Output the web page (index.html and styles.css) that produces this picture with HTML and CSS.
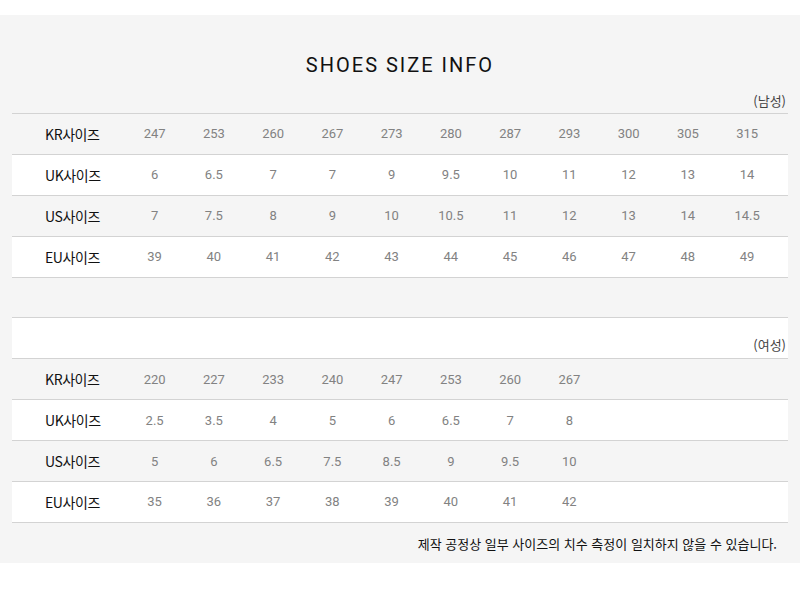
FILE: index.html
```html
<!DOCTYPE html>
<html lang="ko">
<head>
<meta charset="utf-8">
<title>Shoes Size Info</title>
<link rel="stylesheet" href="styles.css">
</head>
<body>
<div class="panel">
  <h1 class="title">SHOES SIZE INFO</h1>
  <div class="caption">(남성)</div>
  <div class="tbl">
    <div class="row gray"><div class="lbl">KR사이즈</div><div>247</div><div>253</div><div>260</div><div>267</div><div>273</div><div>280</div><div>287</div><div>293</div><div>300</div><div>305</div><div>315</div></div>
    <div class="row white"><div class="lbl">UK사이즈</div><div>6</div><div>6.5</div><div>7</div><div>7</div><div>9</div><div>9.5</div><div>10</div><div>11</div><div>12</div><div>13</div><div>14</div></div>
    <div class="row gray"><div class="lbl">US사이즈</div><div>7</div><div>7.5</div><div>8</div><div>9</div><div>10</div><div>10.5</div><div>11</div><div>12</div><div>13</div><div>14</div><div>14.5</div></div>
    <div class="row white"><div class="lbl">EU사이즈</div><div>39</div><div>40</div><div>41</div><div>42</div><div>43</div><div>44</div><div>45</div><div>46</div><div>47</div><div>48</div><div>49</div></div>
    <div class="row gray spacer"></div>
    <div class="row white caprow"><div class="cap2">(여성)</div></div>
    <div class="row gray"><div class="lbl">KR사이즈</div><div>220</div><div>227</div><div>233</div><div>240</div><div>247</div><div>253</div><div>260</div><div>267</div></div>
    <div class="row white"><div class="lbl">UK사이즈</div><div>2.5</div><div>3.5</div><div>4</div><div>5</div><div>6</div><div>6.5</div><div>7</div><div>8</div></div>
    <div class="row gray"><div class="lbl">US사이즈</div><div>5</div><div>6</div><div>6.5</div><div>7.5</div><div>8.5</div><div>9</div><div>9.5</div><div>10</div></div>
    <div class="row white"><div class="lbl">EU사이즈</div><div>35</div><div>36</div><div>37</div><div>38</div><div>39</div><div>40</div><div>41</div><div>42</div></div>
  </div>
  <div class="note">제작 공정상 일부 사이즈의 치수 측정이 일치하지 않을 수 있습니다.</div>
</div>
</body>
</html>
```
FILE: styles.css
```css
html, body {
  margin: 0;
  padding: 0;
  background: #fff;
}
body {
  font-family: Roboto, "Noto Sans CJK KR", sans-serif;
}
.panel {
  margin-top: 15px;
  background: #f5f5f5;
  padding: 38px 12px 0;
  height: 548px;
  box-sizing: border-box;
}
.title {
  margin: 0;
  height: 24px;
  line-height: 24px;
  font-family: Roboto, sans-serif;
  font-weight: 400;
  font-size: 20px;
  letter-spacing: 2px;
  text-align: center;
  color: #111;
}
.caption {
  height: 36px;
  display: flex;
  justify-content: flex-end;
  align-items: flex-end;
  padding: 0 2px 4px 0;
  box-sizing: border-box;
  font-family: "Noto Sans CJK KR", sans-serif;
  font-size: 13px;
  line-height: 16px;
  color: #444;
}
.tbl {
  border-top: 1px solid #d3d3d3;
}
.row {
  display: grid;
  grid-template-columns: 113px repeat(11, 59.25px) 1fr;
  align-items: center;
  height: 40.9px;
  box-sizing: border-box;
  border-bottom: 1px solid #d3d3d3;
  font-size: 13px;
  color: #828282;
  text-align: center;
}
.gray { background: #f5f5f5; }
.white { background: #fff; }
.lbl {
  text-align: left;
  padding-left: 33px;
  font-family: "Noto Sans CJK KR", sans-serif;
  font-size: 14px;
  letter-spacing: -0.4px;
  color: #111;
}
.caprow {
  display: flex;
  justify-content: flex-end;
  align-items: flex-end;
  padding: 0 2px 5px 0;
}
.cap2 {
  font-family: "Noto Sans CJK KR", sans-serif;
  font-size: 13px;
  line-height: 16px;
  color: #444;
}
.note {
  height: 41px;
  display: flex;
  align-items: center;
  justify-content: flex-end;
  padding-right: 11px;
  font-family: "Noto Sans CJK KR", sans-serif;
  font-size: 13px;
  color: #111;
}
```
